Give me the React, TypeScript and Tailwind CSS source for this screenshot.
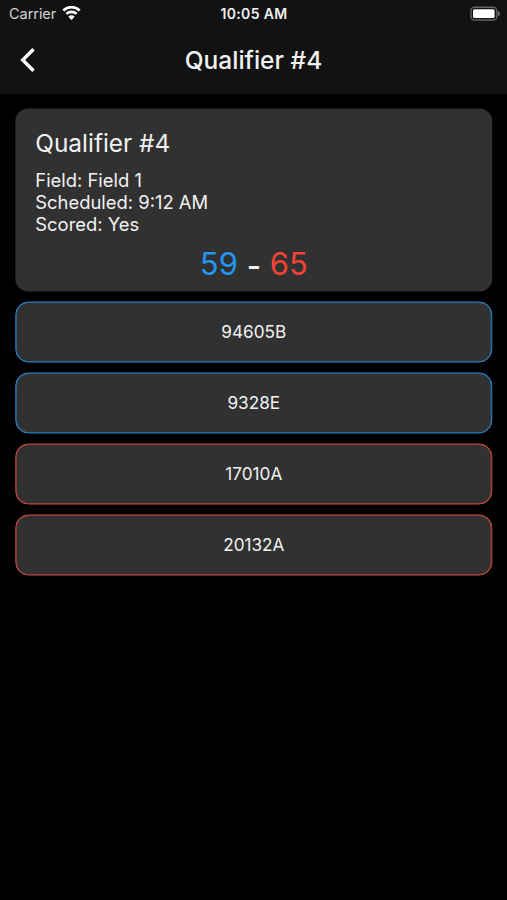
const teams = [
  { name: '94605B', alliance: 'blue' },
  { name: '9328E', alliance: 'blue' },
  { name: '17010A', alliance: 'red' },
  { name: '20132A', alliance: 'red' },
];

function StatusBar() {
  return (
    <div className="grid h-[27px] grid-cols-3 items-center pl-[9px] pr-[6px] text-[#f0f0f0]">
      <div className="flex items-center gap-[6px]">
        <span className="pt-px text-[14.5px] leading-[26px] tracking-[-0.05px] text-[#d2d2d2]">Carrier</span>
        <svg className="h-[15px] w-[19px]" viewBox="0 0 19 15" fill="none" stroke="#fff" strokeWidth="2.7">
          <path d="M1.3 4.5a11.7 11.7 0 0 1 16.4 0" />
          <path d="M4.4 7.9a7.3 7.3 0 0 1 10.2 0" />
          <path d="M9.5 14 6.3 10.7a4.7 4.7 0 0 1 6.4 0Z" fill="#fff" stroke="none" />
        </svg>
      </div>
      <span className="pr-[2px] pt-px text-center text-[14px] font-semibold leading-[26px] tracking-[0.35px]">10:05 AM</span>
      <svg className="h-[16px] w-[32px] justify-self-end" viewBox="0 0 32 16" fill="none">
        <rect x="2" y="1.2" width="25.8" height="12.8" rx="3.6" stroke="#626262" strokeWidth="1.4" />
        <rect x="4" y="3.2" width="21.6" height="8.9" rx="1.5" fill="#fff" />
        <path d="M29 5.2c2.6.6 2.6 4.3 0 4.9Z" fill="#777" />
      </svg>
    </div>
  );
}

export default function App() {
  return (
    <div className="h-[900px] w-full overflow-hidden bg-black font-['Inter',sans-serif] text-[#f1f1f1]">
      <header className="h-[94px] bg-[#121212]">
        <StatusBar />
        <div className="grid h-[65px] grid-cols-[60px_1fr_60px] items-center">
          <button className="pl-[20px]" aria-label="Back">
            <svg className="h-[26px] w-[16px]" viewBox="0 0 16 26" fill="none" stroke="#fff" strokeWidth="3.4">
              <path d="M13.5 2.2 2.7 13 13.5 23.8" />
            </svg>
          </button>
          <h1 className="text-center text-[24.5px] font-medium leading-[30px]">Qualifier #4</h1>
        </div>
      </header>
      <main className="flex translate-x-[0.3px] translate-y-[0.5px] flex-col gap-[10px] px-[15px] pt-[14px]">
        <section className="h-[183px] rounded-[13px] bg-[#313131] px-[20px] pt-[19px]">
          <h2 className="text-[24.4px] leading-[30px]">Qualifier #4</h2>
          <div className="mt-[11px] text-[18.4px] leading-[22px]">
            <p>Field: Field 1</p>
            <p>Scheduled: 9:12 AM</p>
            <p>Scored: Yes</p>
          </div>
          <p className="mt-[9px] text-center text-[31px] leading-[40px]">
            <span className="text-[#2196f3]">59</span>{' '}
            <span className="relative top-[2px] font-medium">-</span>{' '}
            <span className="text-[#f44336]">65</span>
          </p>
        </section>
        {teams.map((team) => (
          <button
            key={team.name}
            className={`flex h-[61px] items-center justify-center rounded-[13px] border bg-[#313131] pb-[2px] text-[17.2px] ${
              team.alliance === 'blue'
                ? 'border-[#2b87cf] shadow-[inset_0_0_0_0.5px_#2b87cf]'
                : 'border-[#cf4a42] shadow-[inset_0_0_0_0.5px_#cf4a42]'
            }`}
          >
            {team.name}
          </button>
        ))}
      </main>
    </div>
  );
}
